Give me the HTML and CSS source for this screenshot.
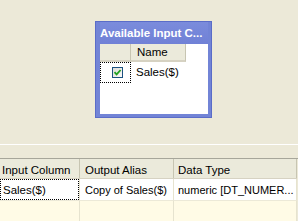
FILE: index.html
```html
<!DOCTYPE html>
<html>
<head>
<meta charset="utf-8">
<link rel="stylesheet" href="styles.css">
</head>
<body>
<div class="canvas">
  <div class="win">
    <div class="title">Available Input C...</div>
    <div class="inner">
      <div class="hdr">
        <div class="hc c1"></div>
        <div class="hc c2">Name</div>
      </div>
      <div class="row">
        <div class="rc c1 focus"><span class="chk"><svg width="9" height="9" viewBox="0 0 9 9"><path d="M1.5 4.2 L3.6 6.4 L7.6 2" fill="none" stroke="#21a121" stroke-width="1.8"/></svg></span></div>
        <div class="rc c2">Sales($)</div>
      </div>
    </div>
  </div>
</div>
<div class="sep"></div>
<div class="band"></div>
<div class="grid">
  <div class="ghdr">
    <div class="gh g1">Input Column</div>
    <div class="gh g2">Output Alias</div>
    <div class="gh g3">Data Type</div>
  </div>
  <div class="grow">
    <div class="gc g1 sel"><span class="dot">Sales($)</span></div>
    <div class="gc g2 wh">Copy of Sales($)</div>
    <div class="gc g3 wh">numeric [DT_NUMER...</div>
  </div>
  <div class="grow empty">
    <div class="gc g1"></div>
    <div class="gc g2"></div>
    <div class="gc g3"></div>
  </div>
</div>
</body>
</html>
```
FILE: styles.css
```css
html, body { margin: 0; padding: 0; }
body {
  width: 298px; height: 221px; overflow: hidden;
  background: #ece9d8;
  font-family: Tahoma, "DejaVu Sans", "Liberation Sans", sans-serif;
  font-size: 11px; color: #000;
}
.canvas { height: 144px; padding: 21px 0 0 95px; box-sizing: border-box; }
.win {
  width: 117px; height: 97px; box-sizing: border-box;
  background: #7284d6;
  border: 1px solid #5a6cc8;
  padding: 0 3px 3px 4px;
  display: flex; flex-direction: column;
}
.title {
  height: 22px; line-height: 22px; color: #fff; font-weight: bold;
  font-family: "Liberation Sans", sans-serif; font-size: 11.5px;
  padding-left: 0; white-space: nowrap; overflow: hidden;
  background: linear-gradient(#7b8cdc, #7081d6);
}
.inner { flex: 1; background: #fff; padding-top: 0; }
.hdr { display: flex; height: 18px; }
.hc {
  background: #ebeadb; box-sizing: border-box;
  border-bottom: 2px solid #d6d2c2;
  border-right: 1px solid #c7c5b2;
  line-height: 17px;
  font-family: "Liberation Sans", sans-serif;
  font-size: 11.5px;
}
.c1 { width: 31px; }
.c2 { width: 55px; padding-left: 6px; }
.hc.c1 { width: 31px; }
.row { display: flex; height: 21px; }
.rc { box-sizing: border-box; line-height: 20px; font-family: "Liberation Sans", sans-serif; font-size: 11.5px; }
.rc.c2 { padding-left: 5px; }
.focus { border: 1px dotted #000; display: flex; align-items: center; padding-left: 11px; }
.chk {
  width: 11px; height: 11px; box-sizing: border-box;
  border: 1px solid #1c5180;
  background: linear-gradient(135deg, #dcdcd7, #fbfbf9);
  display: flex; align-items: center; justify-content: center;
}
.chk svg { display: block; }
.sep { height: 1px; background: #fff; }
.band { height: 13px; background: #ece9d8; border-bottom: 1px solid #a7a69a; }
.grid { width: 297px; }
.ghdr { display: flex; height: 19px; background: #ebeadb; border-bottom: 1px solid #d6d2c2; }
.gh {
  box-sizing: border-box; border-right: 1px solid #c7c5b2;
  line-height: 22px; padding-left: 2px;
  font-family: "Liberation Sans", sans-serif; font-size: 11.5px; white-space: nowrap;
}
.g1 { width: 80px; }
.g2 { width: 94px; }
.g3 { width: 123px; }
.gh.g2, .gc.g2 { padding-left: 5px; }
.gh.g3, .gc.g3 { padding-left: 4px; }
.grow { display: flex; height: 22px; background: #fffbe6; }
.gc {
  box-sizing: border-box; border-right: 1px solid #e6e3cf; border-bottom: 1px solid #ece9d8;
  line-height: 22px; white-space: nowrap; overflow: hidden;
  font-family: "Liberation Sans", sans-serif; font-size: 11px;
}
.wh { background: #fff; }
.sel { background: #fff; padding: 0; }
.dot { display: block; height: 100%; box-sizing: border-box; border: 1px dotted #000; padding-left: 2px; line-height: 20px; font-size: 11.5px; }
.empty .gc { border-bottom: none; }
```
